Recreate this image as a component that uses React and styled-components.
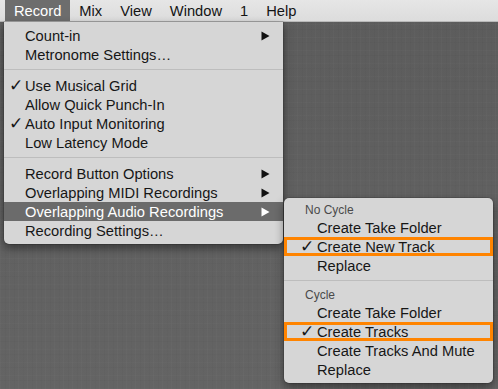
import React from "react";
import styled, { createGlobalStyle, css } from "styled-components";

const Global = createGlobalStyle`
  html, body { margin: 0; padding: 0; background: #5e5e5e; }
  * { box-sizing: border-box; }
`;

const Screen = styled.div`
  position: relative;
  width: 498px;
  height: 389px;
  overflow: hidden;
  font-family: "Liberation Sans", Arial, Helvetica, sans-serif;
  font-size: 14.5px;
  color: #161616;
  background-color: #5f5f5f;
  background-image:
    repeating-linear-gradient(90deg, rgba(255,255,255,0.018) 0 1px, transparent 1px 5px, rgba(0,0,0,0.02) 5px 6px, transparent 6px 9px),
    repeating-linear-gradient(0deg, rgba(255,255,255,0.015) 0 1px, transparent 1px 8px, rgba(0,0,0,0.02) 8px 9px, transparent 9px 13px),
    linear-gradient(180deg, #5c5c5c, #646464);
`;

const MenuBar = styled.div`
  display: flex;
  align-items: stretch;
  height: 22px;
  padding-left: 5px;
  background: linear-gradient(180deg, #e6e6e6, #dcdcdc);
  border-bottom: 1px solid #b9b9b9;
`;

const BarItem = styled.div`
  display: flex;
  align-items: center;
  padding: 0 9px;
  font-size: 14.7px;
  color: ${p => (p.$active ? "#ffffff" : "#141414")};
  background: ${p => (p.$active ? "#6d6d6d" : "transparent")};
`;

const Menu = styled.div`
  position: absolute;
  background: #d6d6d6;
  box-shadow: 0 4px 10px rgba(0, 0, 0, 0.45), 0 0 0 0.5px rgba(0,0,0,0.25);
  padding: 4px 0;
`;

const MainMenu = styled(Menu)`
  left: 4px;
  top: 22px;
  width: 279px;
  border-radius: 0 0 5px 5px;
`;

const SubMenu = styled(Menu)`
  left: 284px;
  top: 198px;
  width: 209px;
  border-radius: 5px;
`;

const Row = styled.div`
  position: relative;
  display: flex;
  align-items: center;
  height: 19px;
  padding-left: ${p => p.$indent}px;
  padding-right: 13px;
  white-space: nowrap;
  font-size: 14.7px;
  ${p => p.$active && css`
    background: #6b6b6b;
    color: #ffffff;
  `}
  ${p => p.$marked && css`
    box-shadow: inset 0 0 0 3px #ff8400;
  `}
`;

const Check = styled.span`
  position: absolute;
  left: ${p => p.$left}px;
  top: 0;
  font-family: "DejaVu Sans", sans-serif;
  font-weight: bold;
  font-size: 17px;
  line-height: 19px;
`;

const Label = styled.span`
  flex: 1;
`;

const Header = styled.div`
  display: flex;
  align-items: center;
  height: 16px;
  padding-left: 21px;
  font-size: 12px;
  color: #4a4a4a;
`;

const Separator = styled.div`
  height: 1px;
  margin: 5px 0 6px;
  background: #bdbdbd;
`;

const Arrow = ({ color }) => (
  <svg width="9" height="10" viewBox="0 0 9 10">
    <path d="M0.5 0.5 L8.5 5 L0.5 9.5 Z" fill={color} />
  </svg>
);

const Item = ({ label, checked, submenu, active, marked, indent = 21, checkLeft = 5 }) => (
  <Row $indent={indent} $active={active} $marked={marked}>
    {checked && <Check $left={checkLeft}>✓</Check>}
    <Label>{label}</Label>
    {submenu && <Arrow color={active ? "#ffffff" : "#111111"} />}
  </Row>
);

export default function App() {
  return (
    <>
      <Global />
      <Screen>
        <MenuBar>
          <BarItem $active>Record</BarItem>
          <BarItem>Mix</BarItem>
          <BarItem>View</BarItem>
          <BarItem>Window</BarItem>
          <BarItem>1</BarItem>
          <BarItem>Help</BarItem>
        </MenuBar>

        <MainMenu>
          <Item label="Count-in" submenu />
          <Item label="Metronome Settings…" />
          <Separator />
          <Item label="Use Musical Grid" checked />
          <Item label="Allow Quick Punch-In" />
          <Item label="Auto Input Monitoring" checked />
          <Item label="Low Latency Mode" />
          <Separator />
          <Item label="Record Button Options" submenu />
          <Item label="Overlapping MIDI Recordings" submenu />
          <Item label="Overlapping Audio Recordings" submenu active />
          <Item label="Recording Settings…" />
        </MainMenu>

        <SubMenu>
          <Header>No Cycle</Header>
          <Item label="Create Take Folder" indent={33} />
          <Item label="Create New Track" indent={33} checkLeft={16} checked marked />
          <Item label="Replace" indent={33} />
          <Separator />
          <Header>Cycle</Header>
          <Item label="Create Take Folder" indent={33} />
          <Item label="Create Tracks" indent={33} checkLeft={16} checked marked />
          <Item label="Create Tracks And Mute" indent={33} />
          <Item label="Replace" indent={33} />
        </SubMenu>
      </Screen>
    </>
  );
}
